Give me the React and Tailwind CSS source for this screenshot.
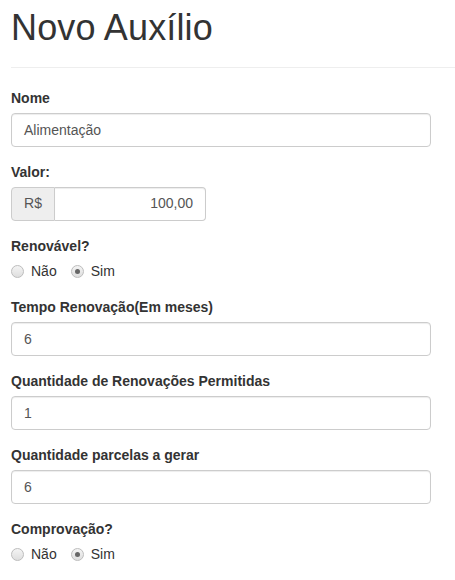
import React from "react";

function Field({ label, value }) {
  return (
    <div className="mb-[15px]">
      <div className="text-[14px] font-bold leading-[20px] mb-[5px] text-[#333]">{label}</div>
      <div className="h-[34px] w-[420px] px-[12px] py-[6px] border border-[#ccc] rounded-[4px] shadow-[inset_0_1px_1px_rgba(0,0,0,0.075)] text-[14px] leading-[20px] text-[#555] bg-white">
        {value}
      </div>
    </div>
  );
}

function Radio({ checked, label }) {
  return (
    <div className="flex items-center h-[21px]">
      <span className="w-[13px] h-[13px] rounded-full border border-[#bdbdbd] bg-[linear-gradient(#f4f4f4,#dedede)] flex items-center justify-center">
        {checked && <span className="w-[5px] h-[5px] rounded-full bg-[#666]" />}
      </span>
      <span className="ml-[7px] text-[14px] leading-[20px] text-[#333]">{label}</span>
    </div>
  );
}

function RadioGroup({ label }) {
  return (
    <div className="mb-[15px]">
      <div className="text-[14px] font-bold leading-[20px] mb-[5px] text-[#333]">{label}</div>
      <div className="flex items-center gap-[14px]">
        <Radio label="Não" />
        <Radio checked label="Sim" />
      </div>
    </div>
  );
}

export default function App() {
  return (
    <div className="pl-[11px] bg-white min-h-[580px] text-[#333]" style={{ fontFamily: '"Liberation Sans", Arial, sans-serif' }}>
      <div className="pb-[9px] border-b border-[#eee] mb-[20px]">
        <h1 className="text-[36px] leading-[1.1] font-normal mt-[8px] mb-[10px] text-[#333] tracking-[0.15px]">Novo Auxílio</h1>
      </div>
      <Field label="Nome" value="Alimentação" />
      <div className="mb-[15px]">
        <div className="text-[14px] font-bold leading-[20px] mb-[5px]">Valor:</div>
        <div className="flex w-[195px] h-[34px]">
          <div className="w-[44px] shrink-0 flex items-center justify-center bg-[#eee] border border-[#ccc] rounded-l-[4px] text-[14px] text-[#555]">R$</div>
          <div className="flex-1 flex items-center justify-end px-[12px] border border-l-0 border-[#ccc] rounded-r-[4px] shadow-[inset_0_1px_1px_rgba(0,0,0,0.075)] text-[14px] text-[#555]">100,00</div>
        </div>
      </div>
      <RadioGroup label="Renovável?" />
      <Field label="Tempo Renovação(Em meses)" value="6" />
      <Field label="Quantidade de Renovações Permitidas" value="1" />
      <Field label="Quantidade parcelas a gerar" value="6" />
      <RadioGroup label="Comprovação?" />
    </div>
  );
}
